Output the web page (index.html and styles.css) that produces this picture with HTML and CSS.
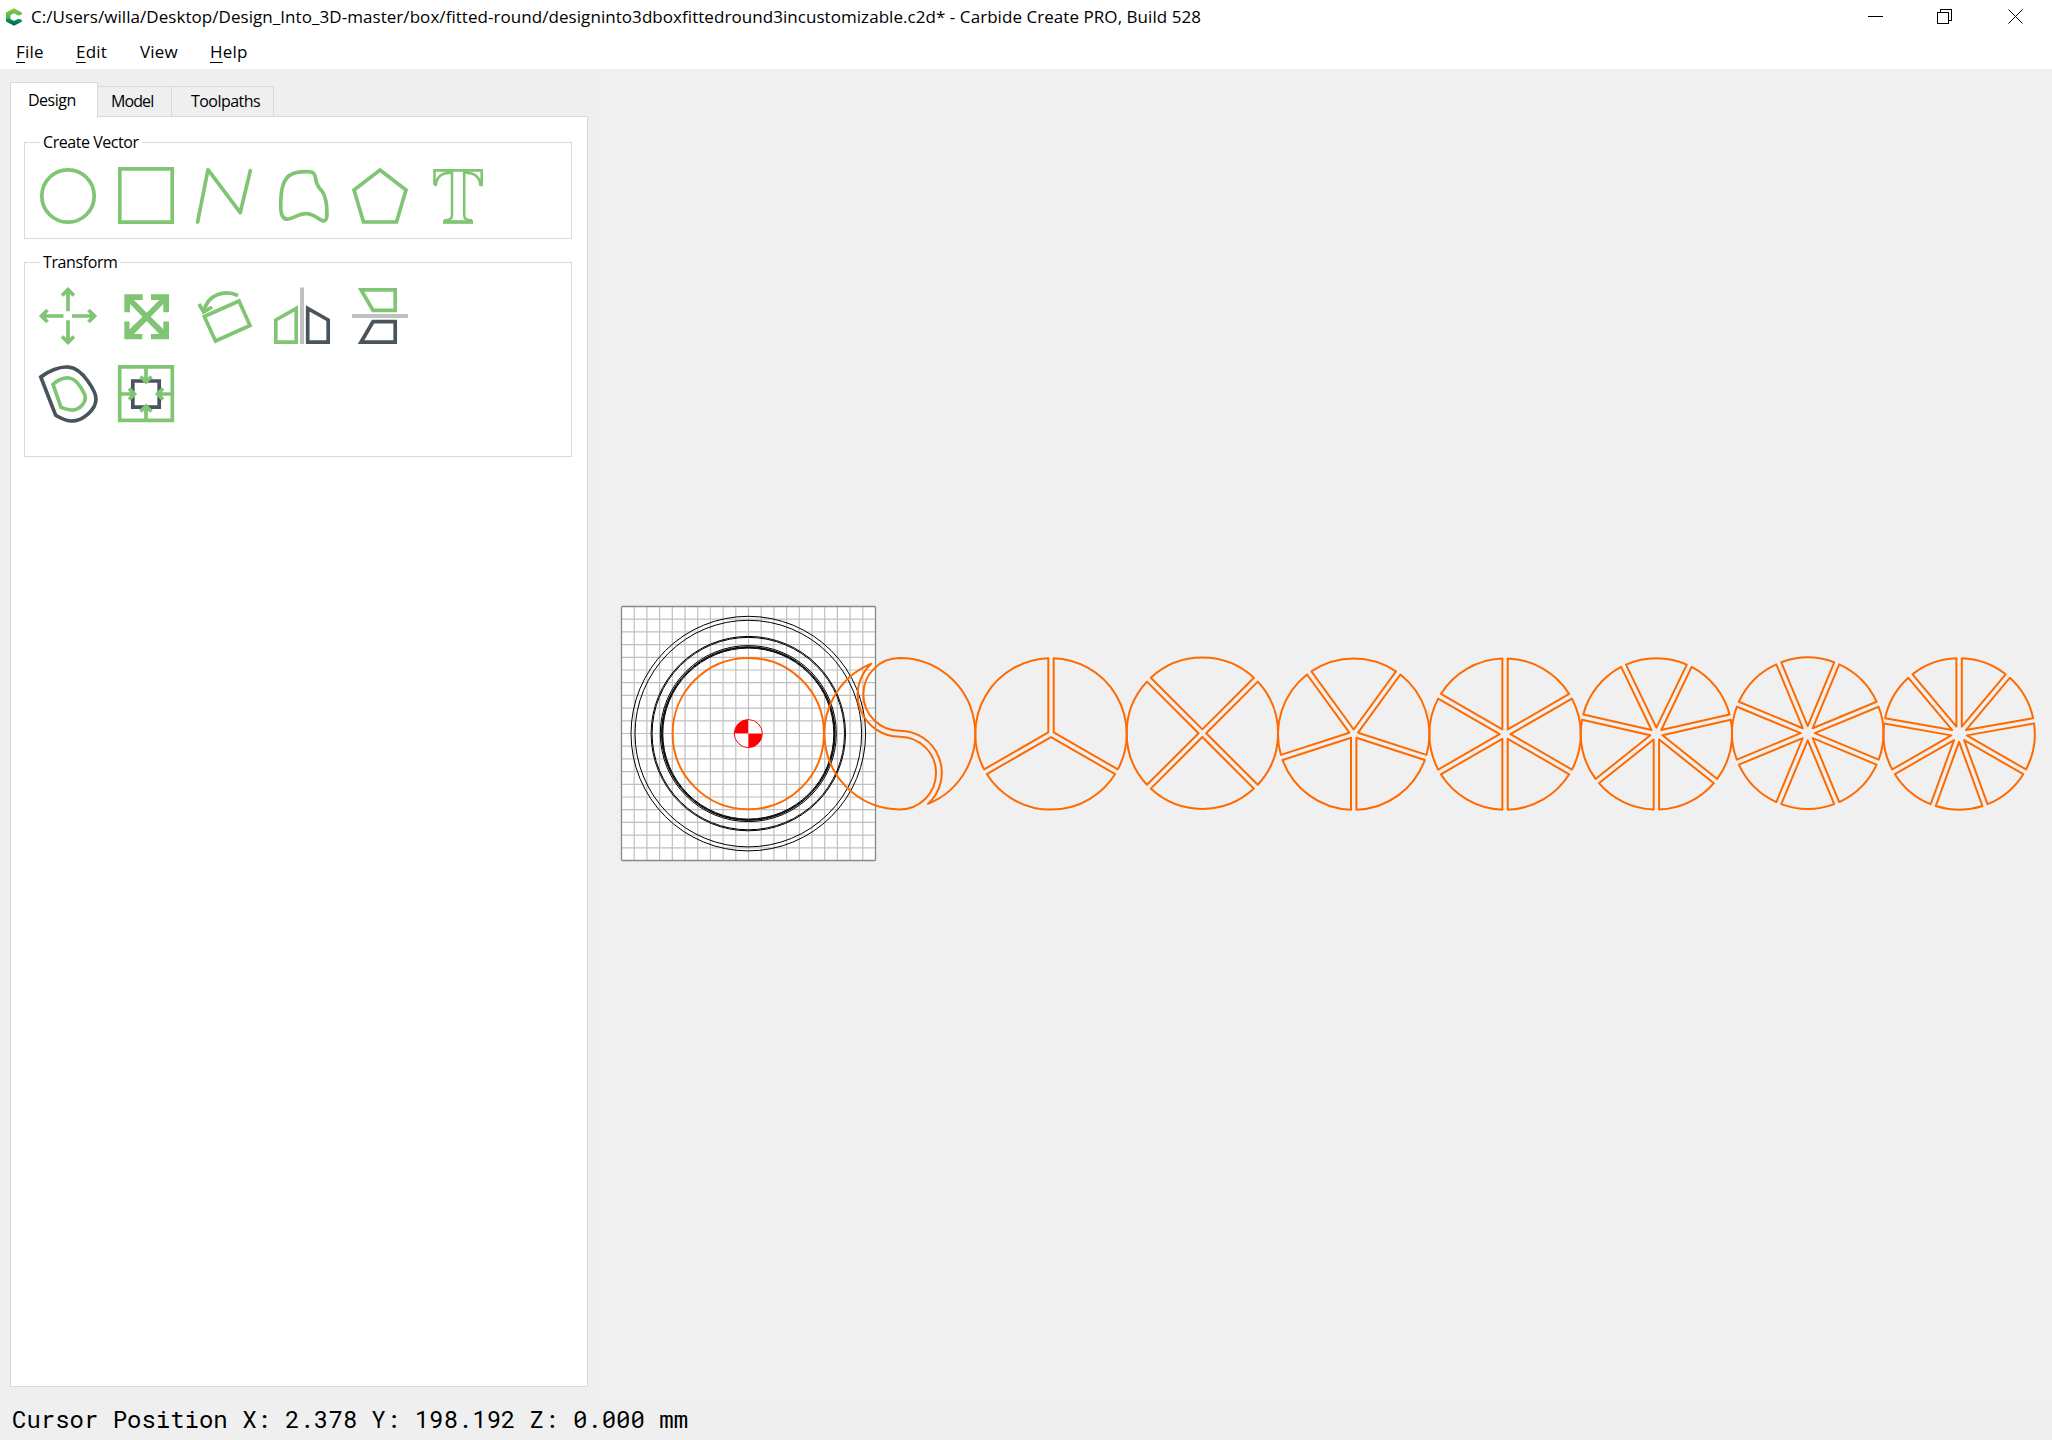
FILE: index.html
```html
<!DOCTYPE html>
<html lang="en">
<head>
<meta charset="utf-8">
<title>Carbide Create PRO</title>
<link rel="stylesheet" href="styles.css">
</head>
<body>
<header class="titlebar">
  <svg class="logo" width="20" height="22" viewBox="0 0 20 22">
    <defs><linearGradient id="lg" x1="0" y1="0" x2="0" y2="1"><stop offset="0" stop-color="#8dc63f"/><stop offset=".55" stop-color="#4cb748"/><stop offset=".65" stop-color="#0b8f5a"/><stop offset="1" stop-color="#00604c"/></linearGradient></defs>
    <path d="M10 2.300 17.800 6.400V8.600L14.300 9.600 10 7.200 6.500 9.100V13.100L10 15 14.300 12.700 17.800 13.800V15.700L10 19.700 2 15.600V6.400Z" fill="url(#lg)"/>
  </svg>
  <span class="title">C:/Users/willa/Desktop/Design_Into_3D-master/box/fitted-round/designinto3dboxfittedround3incustomizable.c2d* - Carbide Create PRO, Build 528</span>
  <svg class="controls" width="184" height="34" viewBox="1868 0 184 34" shape-rendering="crispEdges">
    <path d="M1868 16.5h15M1937.5 12.5h11v11h-11zM1940.5 12v-2.500h11v11h-3"/>
    <path d="M2008.500 9.500l14 14M2022.500 9.500l-14 14" shape-rendering="auto"/>
  </svg>
</header>
<nav class="menubar">
  <span class="menu file"><u>F</u>ile</span>
  <span class="menu edit"><u>E</u>dit</span>
  <span class="menu view">View</span>
  <span class="menu help"><u>H</u>elp</span>
</nav>
<main class="work">
  <aside class="side">
    <div class="tabs">
      <div class="tab active"><span>Design</span></div>
      <div class="tab model"><span>Model</span></div>
      <div class="tab paths"><span>Toolpaths</span></div>
    </div>
    <div class="panel">
      <section class="group vector">
        <h2 class="legend"><span class="t-create">Create Vector</span></h2>
        <div class="tools">
          <svg class="icon" viewBox="0 0 56 56"><circle cx="28" cy="28" r="26.200"/></svg>
          <svg class="icon" viewBox="0 0 56 56"><path d="M1.800.800H54.200V54.200H1.800Z"/></svg>
          <svg class="icon" viewBox="0 0 56 56"><path class="round" d="M1.600 54 12 1.700 44.200 44.700 54.300 2.700"/></svg>
          <svg class="icon" viewBox="0 0 56 56"><path d="M6.700 36C7 24 8 15 14 8.500 19 4 26 3.700 33 3.700 40 3.700 41 6 41.700 11 42.500 18 45 19.500 48 23 51.500 28 53 38 53 46 53 51 51.500 54 48 52.500 43 50 39 45.700 32 45.700 24 45.700 18 51.500 13 51.200 7.500 51 6.500 43 6.700 36Z"/></svg>
          <svg class="icon" viewBox="0 0 56 56"><path d="M28 2 54 22 44.500 54H11.500L2 22Z"/></svg>
          <svg class="icon" viewBox="0 0 56 56"><path class="thin" d="M4.500 17V2.400H51.700V17H50.500C49.500 9 45 4.300 34.200 4.800V47C34.200 51 36 52 42 52.500M4.500 17H5.700C6.700 9 11 4.300 22 4.800V47C22 51 20 52 14 52.500"/><path d="M13 54H43"/></svg>
        </div>
      </section>
      <section class="group transform">
        <h2 class="legend"><span class="t-trans">Transform</span></h2>
        <div class="tools">
          <svg class="icon" viewBox="0 0 56 56"><path d="M28 2V23.300M28 32.300V54M2 28H23.500M32 28H54M22 7.500 28 1.500 34 7.500M22 48.500 28 54.500 34 48.500M7.500 22 1.500 28 7.500 34M48.500 22 54.500 28 48.500 34"/></svg>
          <svg class="icon" viewBox="0 0 56 56"><path class="fill" d="M6.300 6.300H24.700V12H16L28.700 24.700 41.300 12H33V6.300H51V24.300H45.300V16L32.700 28.700 45.300 41.300V33.500H51V51.300H33V46H41.300L28.700 33 16 46H24.300V51.300H6.300V33.500H11.500V41.300L24.500 28.700 12 16V24.300H6.300Z"/></svg>
          <svg class="icon" viewBox="0 0 56 56"><path d="M8.300 28.500 43 13 54 37.500 19.500 53ZM42 7.500C29 1.500 11 6 8 23.500M3 16 7.700 24 16 19"/></svg>
          <svg class="icon" viewBox="0 0 56 56"><path d="M1.800 32 22.200 20.500V54.200H1.800Z"/><path class="dark" d="M54.200 32 33.700 20.500V54.200H54.200Z"/><path class="gray" d="M28 -.5V56"/></svg>
          <svg class="icon" viewBox="0 0 56 56"><path d="M9 1.800H43.200V22.300H21Z"/><path class="dark" d="M9 54.200H43.200V33.700H21Z"/><path class="gray" d="M0 28H56"/></svg>
          <svg class="icon" viewBox="0 0 56 56"><path class="dark" d="M.8 11C8 5 20 0 29 1.200 43 2.500 56 26 56 33 56 44 42 55.500 31 55 25 54.800 20 52 15.700 49.300Z"/><path d="M13 18.300C18 14 24 11.500 29 12 36 12.500 42 23 44.500 28 48 36 39 44.500 31 44 27 43.800 24 42.500 21 41.300Z"/></svg>
          <svg class="icon" viewBox="0 0 56 56"><path class="dark" d="M14.800 15H41.200V41.200H14.800Z"/><path d="M1.700.800H54.300V54.300H1.700ZM28 0V16M28 55V40M2 28H16M54 28H40M22.500 10.500 28 16 33.500 10.500M22.500 45.500 28 40 33.500 45.500M11 22.500 16.500 28 11 33.500M45 22.500 39.500 28 45 33.500"/></svg>
        </div>
      </section>
    </div>
  </aside>
  <svg class="canvas" width="1452" height="1331" viewBox="600 69 1452 1331">
    <rect class="stock" x="621.500" y="606.500" width="254" height="254"/>
    <g id="grid" class="grid"></g>
    <rect class="edge" x="621.500" y="606.500" width="254" height="254" rx="1"/>
    <g class="cut">
      <circle cx="748.300" cy="733.600" r="117.300"/>
      <circle cx="748.300" cy="733.600" r="113.300"/>
      <circle cx="748.300" cy="733.600" r="97.200"/>
      <circle cx="748.300" cy="733.600" r="96.200"/>
      <circle cx="748.300" cy="733.600" r="88"/>
      <circle cx="748.300" cy="733.600" r="86.800"/>
      <circle cx="748.300" cy="733.600" r="86.200"/>
      <circle cx="748.300" cy="733.600" r="85.500"/>
    </g>
    <g id="pockets" class="pocket">
      <circle cx="748.300" cy="733.600" r="75.700"/>
      <path d="M871.300 663.700A75.700 75.700 0 0 0 899.700 809.400A36.300 36.300 0 0 0 899.700 736.700A42 42 0 0 1 871.300 663.700Z"/>
      <path d="M899.700 658A36.300 36.300 0 0 0 899.700 730.700A42 42 0 0 1 927.900 803.900A75.700 75.700 0 0 0 899.700 658Z"/>
    </g>
    <g class="origin">
      <circle cx="748.300" cy="733.600" r="14"/>
      <path d="M748.300 733.600V719.600A14 14 0 0 0 734.300 733.600ZM748.300 733.600V747.600A14 14 0 0 0 762.300 733.600Z"/>
    </g>
  </svg>
</main>
<footer class="status">Cursor Position X: 2.378 Y: 198.192 Z: 0.000 mm</footer>
<script src="drawing.js"></script>
</body>
</html>
```
FILE: styles.css
```css
* { box-sizing: border-box; }
html { height: 1440px; overflow: hidden; }
body {
  margin: 0;
  width: 2052px;
  height: 1440px;
  overflow: hidden;
  display: flex;
  flex-direction: column;
  background: #efefef;
  color: #000;
  font-family: "Open Sans", "Noto Sans", sans-serif;
  font-size: 17px;
}
.titlebar {
  height: 34px;
  background: #fff;
  display: flex;
  align-items: center;
  padding-left: 4px;
}
.logo { margin-right: 7px; }
.title { white-space: pre; letter-spacing: 0.055px; line-height: 34px; }
.controls { margin-left: auto; fill: none; stroke: #000; stroke-width: 1; }
.menubar {
  height: 35px;
  background: #fff;
  display: flex;
  padding-left: 16px;
  line-height: 36px;
  letter-spacing: 0.2px;
}
.menu u { text-underline-offset: 4px; text-decoration-thickness: 1px; }
.file { width: 60px; }
.edit { width: 64px; }
.view { width: 70px; }
.work { height: 1331px; display: flex; }
.side { width: 600px; padding: 13px 12px 0 10px; font-size: 16px; }
.tabs { height: 34px; display: flex; align-items: flex-end; }
.tab {
  height: 30px;
  border: 1px solid #d9d9d9;
  border-left: 0;
  border-bottom: 0;
  line-height: 29px;
  letter-spacing: -0.5px;
  white-space: nowrap;
}
.active {
  height: 36px;
  width: 88px;
  margin-bottom: -2px;
  border-left: 1px solid #d9d9d9;
  background: #fff;
  padding-left: 17px;
  line-height: 35px;
  position: relative;
}
.model { width: 74px; padding-left: 13px; letter-spacing: -0.9px; }
.paths { width: 102px; padding-left: 19px; letter-spacing: -0.55px; }
.panel {
  width: 578px;
  height: 1271px;
  border: 1px solid #d9d9d9;
  background: #fff;
  padding: 25px 15px 0 13px;
}
.group { border: 1px solid #dadada; width: 548px; }
.vector { height: 97px; margin-bottom: 23px; }
.transform { height: 195px; }
.legend {
  margin: -13px 0 0 15px;
  padding: 0 3px;
  width: fit-content;
  height: 24px;
  line-height: 25px;
  background: #fff;
  font-size: 16px;
  font-weight: 400;
  white-space: nowrap;
}
.t-create { letter-spacing: -0.45px; }
.t-trans { letter-spacing: -0.4px; }
.tools {
  display: flex;
  flex-wrap: wrap;
  gap: 22px;
  padding: 14px 60px 0 15px;
}
.transform .tools { padding-right: 130px; }
.icon {
  width: 56px;
  height: 56px;
  overflow: visible;
  fill: none;
  stroke: #80c573;
  stroke-width: 3.700;
}
.icon .round { stroke-linecap: round; stroke-linejoin: round; }
.icon .thin { stroke-width: 2.600; }
.icon .fill { fill: #80c573; stroke: none; }
.icon .dark { stroke: #4a545c; }
.icon .gray { stroke: #c0c0c0; stroke-width: 4; }
.canvas { display: block; background: #f0f0f0; fill: none; }
.stock { fill: #fff; }
.grid { stroke: #c0c0c0; stroke-width: 1.200; }
.edge { stroke: #888; stroke-width: 1.300; }
.cut { stroke: #000; stroke-width: 1; }
.pocket { stroke: #ff6a00; stroke-width: 2; stroke-linejoin: round; }
.origin circle { fill: #fff; stroke: #f00; stroke-width: 1; }
.origin path { fill: #f00; }
.status {
  height: 40px;
  line-height: 38px;
  padding-left: 12px;
  font-family: "Roboto Mono", "DejaVu Sans Mono", monospace;
  font-size: 23.970px;
  white-space: pre;
}
```
FILE: drawing.js
```js
const NS = "http://www.w3.org/2000/svg";

function add(parent, d) {
  const p = document.createElementNS(NS, "path");
  p.setAttribute("d", d);
  parent.appendChild(p);
}

// Stock grid: 20 x 20 cells
const grid = document.getElementById("grid");
for (let i = 1; i < 20; i++) {
  const x = (621.5 + i * 12.7).toFixed(2);
  const y = (606.5 + i * 12.7).toFixed(2);
  add(grid, `M${x} 606.5V860.5M621.5 ${y}H875.5`);
}

// Divided round pockets: each wedge keeps a fixed wall to its neighbours
const R = 75.7, WALL = 2.7;
const layouts = [
  { n: 3, start: 0, cy: 733.9 },
  { n: 4, start: 45, cy: 733.2 },
  { n: 5, start: 180, cy: 734.1 },
  { n: 6, start: 0, cy: 734.1 },
  { n: 7, start: 180, cy: 733.9 },
  { n: 8, start: 22.5, cy: 733.2 },
  { n: 9, start: 0, cy: 734 }
];
const pockets = document.getElementById("pockets");
layouts.forEach((l, k) => {
  const cx = 748.3 + 151.35 * (k + 2);
  const half = Math.PI / l.n;
  const inset = Math.asin(WALL / R);
  const at = (r, a) => `${(cx + r * Math.sin(a)).toFixed(2)} ${(l.cy - r * Math.cos(a)).toFixed(2)}`;
  for (let i = 0; i < l.n; i++) {
    const mid = l.start * Math.PI / 180 + (2 * i + 1) * half;
    add(pockets, `M${at(WALL / Math.sin(half), mid)}L${at(R, mid - half + inset)}A${R} ${R} 0 0 1 ${at(R, mid + half - inset)}Z`);
  }
});
```
